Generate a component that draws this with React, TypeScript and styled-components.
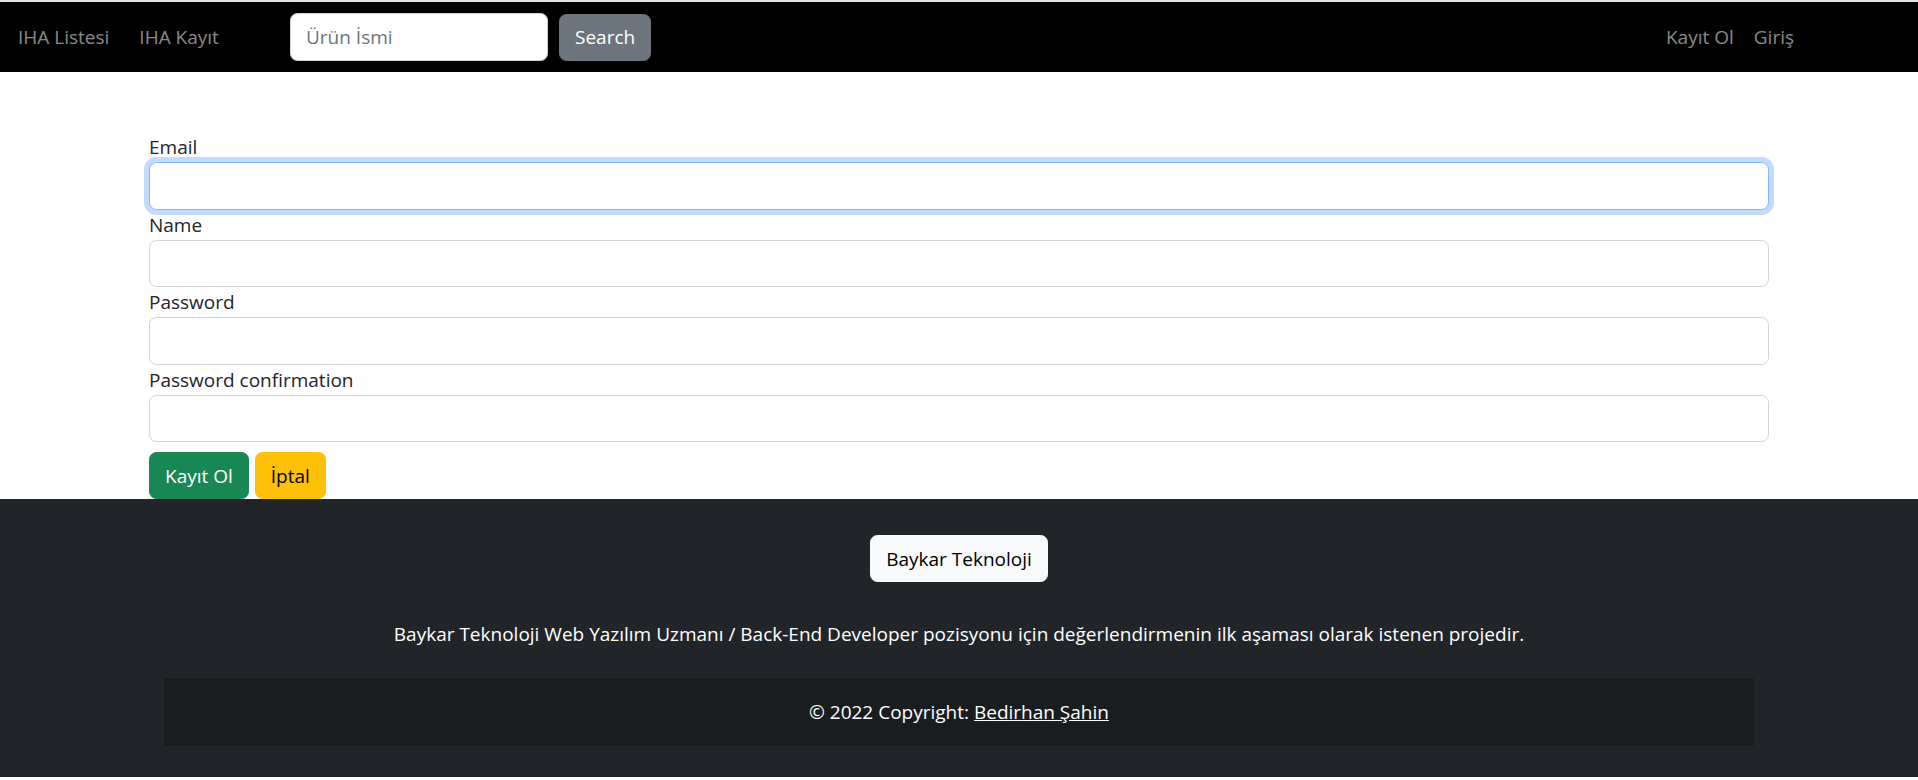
import React from "react";
import styled, { createGlobalStyle, css } from "styled-components";

const FS = "19px";

const Global = createGlobalStyle`
  * { box-sizing: border-box; }
  html, body { margin: 0; padding: 0; background: #fff; }
  body {
    font-family: "Open Sans", "Noto Sans", sans-serif;
    font-size: ${FS};
    line-height: 30px;
    color: #212529;
    border-top: 2px solid #e4e4e4;
  }
`;

const Navbar = styled.nav`
  height: 70px;
  background: #000;
  display: flex;
  align-items: center;
  padding-left: 18px;
  padding-right: 124px;
`;

const NavGroup = styled.div<{ $fixed?: boolean }>`
  display: flex;
  align-items: center;
  gap: ${(p) => (p.$fixed ? "30px" : "20px")};
  ${(p) =>
    p.$fixed
      ? css`
          flex: 0 0 272px;
        `
      : css`
          margin-left: auto;
        `}
`;

const NavLink = styled.a`
  color: rgba(255, 255, 255, 0.55);
  text-decoration: none;
  font-size: ${FS};
  line-height: 30px;
  cursor: pointer;
`;

const SearchForm = styled.form`
  display: flex;
  align-items: center;
  gap: 11px;
`;

const SearchInput = styled.input`
  width: 258px;
  height: 47.5px;
  border: 1.25px solid #ced4da;
  border-radius: 7.5px;
  padding: 0 15px;
  font: inherit;
  font-size: ${FS};
  color: #212529;
  background: #fff;
  outline: none;
  &::placeholder {
    color: #6c757d;
  }
`;

const Button = styled.button<{ $variant: "secondary" | "success" | "warning" | "light" }>`
  font: inherit;
  font-size: ${FS};
  line-height: 30px;
  padding: 7.5px 15px;
  border: 1.25px solid transparent;
  border-radius: 7.5px;
  cursor: pointer;
  ${(p) =>
    ({
      secondary: css`
        background: #6c757d;
        border-color: #6c757d;
        color: #fff;
      `,
      success: css`
        background: #198754;
        border-color: #198754;
        color: #fff;
      `,
      warning: css`
        background: #ffc107;
        border-color: #ffc107;
        color: #000;
      `,
      light: css`
        background: #f8f9fa;
        border-color: #f8f9fa;
        color: #000;
      `,
    })[p.$variant]}
`;

const Main = styled.main`
  width: 1620px;
  margin: 0 auto;
  padding-top: 60px;
`;

const Label = styled.label`
  display: block;
  line-height: 30px;
  font-size: ${FS};
  color: #212529;
`;

const Field = styled.input<{ $focus?: boolean }>`
  display: block;
  width: 100%;
  height: 47.5px;
  padding: 0 15px;
  font: inherit;
  font-size: ${FS};
  color: #212529;
  background: #fff;
  border: 1.25px solid #ced4da;
  border-radius: 7.5px;
  outline: none;
  caret-color: #212529;
  &:focus {
    border-color: #86b7fe;
    box-shadow: 0 0 0 5px rgba(13, 110, 253, 0.25);
  }
  ${(p) =>
    p.$focus &&
    css`
      border-color: #86b7fe;
      box-shadow: 0 0 0 5px rgba(13, 110, 253, 0.25);
    `}
`;

const Actions = styled.div`
  display: flex;
  gap: 6px;
  margin-top: 10px;
`;

const Footer = styled.footer`
  background: #212529;
  color: #fff;
  padding-top: 36px;
  padding-bottom: 31px;
  text-align: center;
`;

const FooterText = styled.p`
  margin: 37px 0 29px;
  font-size: ${FS};
  line-height: 30px;
`;

const Copyright = styled.div`
  width: 1590px;
  margin: 0 auto;
  background: rgba(0, 0, 0, 0.2);
  padding: 19px;
  line-height: 30px;
  font-size: ${FS};
`;

const FooterLink = styled.a`
  color: #fff;
  text-decoration: underline;
`;

const fields = [
  { id: "email", label: "Email", type: "email" },
  { id: "name", label: "Name", type: "text" },
  { id: "password", label: "Password", type: "password" },
  { id: "password2", label: "Password confirmation", type: "password" },
];

export default function App() {
  return (
    <>
      <Global />
      <Navbar>
        <NavGroup $fixed>
          <NavLink>IHA Listesi</NavLink>
          <NavLink>IHA Kayıt</NavLink>
        </NavGroup>
        <SearchForm onSubmit={(e) => e.preventDefault()}>
          <SearchInput placeholder="Ürün İsmi" />
          <Button $variant="secondary" type="submit">
            Search
          </Button>
        </SearchForm>
        <NavGroup>
          <NavLink>Kayıt Ol</NavLink>
          <NavLink>Giriş</NavLink>
        </NavGroup>
      </Navbar>
      <Main>
        <form onSubmit={(e) => e.preventDefault()}>
          {fields.map((f, i) => (
            <div key={f.id}>
              <Label htmlFor={f.id}>{f.label}</Label>
              <Field id={f.id} type={f.type} $focus={i === 0} autoFocus={i === 0} />
            </div>
          ))}
          <Actions>
            <Button $variant="success" type="submit">
              Kayıt Ol
            </Button>
            <Button $variant="warning" type="button">
              İptal
            </Button>
          </Actions>
        </form>
      </Main>
      <Footer>
        <Button $variant="light" type="button">
          Baykar Teknoloji
        </Button>
        <FooterText>
          Baykar Teknoloji Web Yazılım Uzmanı / Back-End Developer pozisyonu için değerlendirmenin ilk
          aşaması olarak istenen projedir.
        </FooterText>
        <Copyright>
          © 2022 Copyright: <FooterLink>Bedirhan Şahin</FooterLink>
        </Copyright>
      </Footer>
    </>
  );
}
